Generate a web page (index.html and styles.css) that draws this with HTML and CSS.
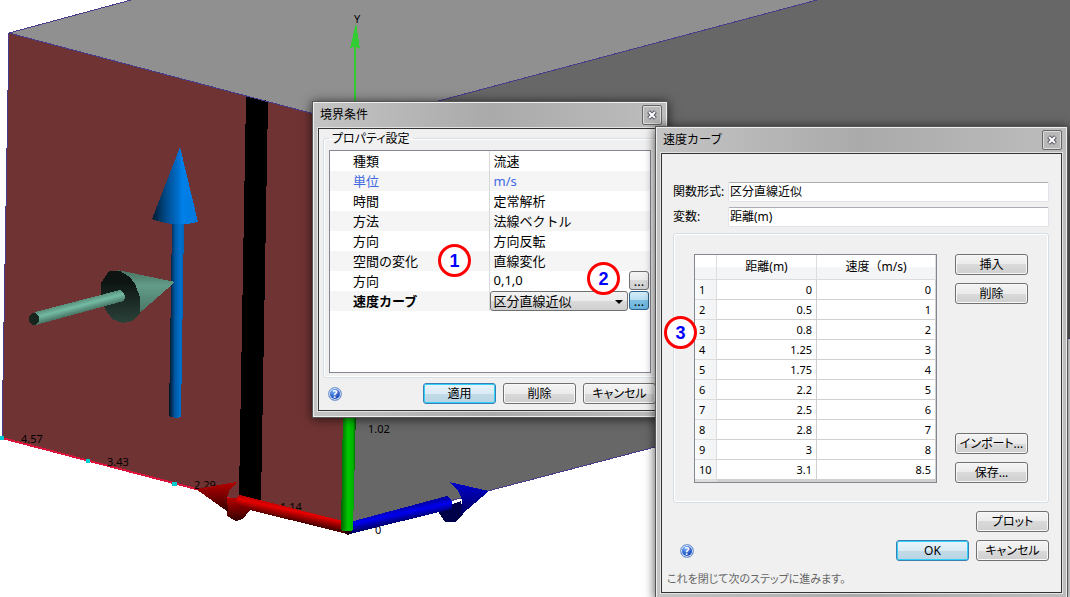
FILE: index.html
```html
<!DOCTYPE html>
<html lang="ja">
<head>
    <meta charset="UTF-8">
    <meta name="viewport" content="width=device-width, initial-scale=1.0">
    <title>境界条件</title>
    <link rel="stylesheet" href="styles.css">
</head>
<body>
    <svg class="scene" viewBox="0 0 1070 597" preserveAspectRatio="xMinYMin slice" shape-rendering="crispEdges">
        <defs>
            <linearGradient id="cone-up" x1="0" x2="1" y1="0" y2="0">
                <stop offset="0" stop-color="#001a30"/>
                <stop offset="0.3" stop-color="#004a88"/>
                <stop offset="0.58" stop-color="#0070d0"/>
                <stop offset="0.65" stop-color="#0080e8"/>
                <stop offset="1" stop-color="#0078dc"/>
            </linearGradient>
            <linearGradient id="rod-up" x1="0" x2="1" y1="0" y2="0">
                <stop offset="0" stop-color="#001020"/>
                <stop offset="0.4" stop-color="#0058a4"/>
                <stop offset="0.75" stop-color="#0070cc"/>
                <stop offset="1" stop-color="#0064b8"/>
            </linearGradient>
            <linearGradient id="rod-teal" gradientUnits="userSpaceOnUse" x1="75" y1="299" x2="79" y2="314">
                <stop offset="0" stop-color="#4a7a6a"/>
                <stop offset="0.5" stop-color="#74bba3"/>
                <stop offset="1" stop-color="#426c5e"/>
            </linearGradient>
            <linearGradient id="cone-teal" x1="0" x2="0" y1="0" y2="1">
                <stop offset="0" stop-color="#48705f"/>
                <stop offset="0.3" stop-color="#629c88"/>
                <stop offset="1" stop-color="#42695c"/>
            </linearGradient>
            <linearGradient id="disc-teal" x1="0" x2="0" y1="0" y2="1">
                <stop offset="0.2" stop-color="#0d1412"/>
                <stop offset="1" stop-color="#2a4239"/>
            </linearGradient>
            <linearGradient id="rod-green" x1="0" x2="1" y1="0" y2="0">
                <stop offset="0" stop-color="#006000"/>
                <stop offset="0.45" stop-color="#00c800"/>
                <stop offset="0.8" stop-color="#00b400"/>
                <stop offset="1" stop-color="#005000"/>
            </linearGradient>
            <linearGradient id="rod-red" gradientUnits="userSpaceOnUse" x1="290" y1="505" x2="287" y2="519">
                <stop offset="0" stop-color="#b00000"/>
                <stop offset="0.35" stop-color="#e80000"/>
                <stop offset="1" stop-color="#500000"/>
            </linearGradient>
            <linearGradient id="cone-red" x1="0" x2="0" y1="0" y2="1">
                <stop offset="0" stop-color="#b80000"/>
                <stop offset="1" stop-color="#300000"/>
            </linearGradient>
            <linearGradient id="rod-blue" gradientUnits="userSpaceOnUse" x1="400" y1="507" x2="403" y2="521">
                <stop offset="0" stop-color="#0000a0"/>
                <stop offset="0.45" stop-color="#0000f0"/>
                <stop offset="1" stop-color="#000070"/>
            </linearGradient>
            <linearGradient id="cone-blue" x1="0" x2="0" y1="0" y2="1">
                <stop offset="0" stop-color="#0000d0"/>
                <stop offset="1" stop-color="#000060"/>
            </linearGradient>
        </defs>

        <!-- box faces -->
        <path fill="#909090" d="M9 33 131 0H817L352 124Z"/>
        <path fill="#676767" d="M352 124 817 0H1070V338L347 528Z"/>
        <path fill="#703333" d="M9 33 352 124 347 528 2 438Z"/>
        <path fill="#000" d="M246 96 268 101 261 501 239 495Z"/>
        <path class="edge" d="M131 0 9 33 352 124 817 0M9 33 2 438M347 528 1070 338"/>
        <path fill="none" stroke="#dc143c" stroke-width="2" d="M2 438 200 490M227 498 240 500"/>
        <path fill="#00ced1" d="M0 436h4v4H0zM86 459h4v4h-4zM172 482h5v4h-5z"/>

        <g class="mark">
            <text x="21" y="443">4.57</text>
            <text x="107" y="466">3.43</text>
            <text x="194" y="489">2.29</text>
            <text x="280" y="511">1.14</text>
            <text x="368" y="433">1.02</text>
            <text x="375" y="534">0</text>
            <text x="354" y="23">Y</text>
        </g>

        <!-- y axis -->
        <path fill="#32cd32" d="M356 23 360 49 356 47V120H354V47L350 48Z"/>

        <!-- direction arrow -->
        <path fill="url(#rod-up)" d="M172 222H184L181 417Q175 419 169 416Z"/>
        <path fill="url(#cone-up)" d="M180 147 198 222Q175 228 152 219Z"/>

        <!-- normal arrow -->
        <path fill="url(#cone-teal)" d="M118 270 175 282 135 317 124 322Z"/>
        <path fill="url(#disc-teal)" d="M109 271H120L130 277 135 284 140 297V313L132 321 122 323 112 319 105 309 101 295V283Z"/>
        <path fill="url(#rod-teal)" d="M35 312 120 290Q127 294 124 301L36 325Z"/>
        <ellipse cx="34" cy="319" rx="5" ry="6" fill="#18251f"/>

        <!-- axis triad -->
        <path fill="url(#cone-red)" d="M227 498H240L250 510 243 519 236 521 227 516Z"/>
        <path fill="url(#cone-red)" d="M196 489 237 482 230 489 227 498 228 512Z"/>
        <path fill="url(#rod-red)" d="M240 495 347 522V534L238 507Q234 499 240 495Z"/>
        <path fill="#000048" d="M437 510 461 501 463 514 455 522H445Z"/>
        <path fill="url(#cone-blue)" d="M449 482 489 491 461 515 462 500Q459 489 449 482Z"/>
        <path fill="url(#rod-blue)" d="M350 522 447 496Q455 501 451 509L350 534Z"/>
        <path fill="url(#rod-green)" d="M343 410H356L353 530Q348 534 341 530Z"/>
        <path fill="#200010" d="M343 531H352L348 535Z"/>
    </svg>

    <section class="dialog dialog-condition">
        <header class="titlebar">
            <h1>境界条件</h1>
            <button class="close" aria-label="閉じる"><svg viewBox="0 0 10 10"><path class="outline" d="M3 3 7 7M7 3 3 7"/><path d="M2 2 8 8M8 2 2 8"/></svg></button>
        </header>
        <div class="panel">
            <fieldset class="group">
                <legend>プロパティ設定</legend>
                <div class="property-box">
                    <table class="properties">
                        <tr><th>種類</th><td>流速</td></tr>
                        <tr class="unit"><th>単位</th><td>m/s</td></tr>
                        <tr><th>時間</th><td>定常解析</td></tr>
                        <tr><th>方法</th><td>法線ベクトル</td></tr>
                        <tr><th>方向</th><td>方向反転</td></tr>
                        <tr><th>空間の変化</th><td>直線変化</td></tr>
                        <tr><th>方向</th><td><div class="editor"><span>0,1,0</span><button class="more" aria-label="方向を編集">...</button></div></td></tr>
                        <tr class="current">
                            <th><label for="curve">速度カーブ</label></th>
                            <td>
                                <div class="editor">
                                    <span class="combo"><select id="curve"><option>区分直線近似</option></select></span>
                                    <button class="more active" aria-label="速度カーブを編集">...</button>
                                </div>
                            </td>
                        </tr>
                    </table>
                </div>
            </fieldset>
            <footer class="actions">
                <button class="help" aria-label="ヘルプ">?</button>
                <button class="btn primary">適用</button>
                <button class="btn">削除</button>
                <button class="btn">キャンセル</button>
            </footer>
        </div>
    </section>

    <section class="dialog dialog-curve">
        <header class="titlebar">
            <h1>速度カーブ</h1>
            <button class="close" aria-label="閉じる"><svg viewBox="0 0 10 10"><path class="outline" d="M3 3 7 7M7 3 3 7"/><path d="M2 2 8 8M8 2 2 8"/></svg></button>
        </header>
        <div class="panel">
            <div class="fields">
                <label for="form">関数形式:</label>
                <input type="text" id="form" value="区分直線近似">
                <label for="variable">変数:</label>
                <input type="text" id="variable" value="距離(m)">
            </div>
            <div class="group curve-data">
                <table class="points">
                    <thead>
                        <tr><th></th><th>距離(m)</th><th>速度（m/s)</th></tr>
                    </thead>
                    <tbody>
                        <tr><th>1</th><td>0</td><td>0</td></tr>
                        <tr><th>2</th><td>0.5</td><td>1</td></tr>
                        <tr><th>3</th><td>0.8</td><td>2</td></tr>
                        <tr><th>4</th><td>1.25</td><td>3</td></tr>
                        <tr><th>5</th><td>1.75</td><td>4</td></tr>
                        <tr><th>6</th><td>2.2</td><td>5</td></tr>
                        <tr><th>7</th><td>2.5</td><td>6</td></tr>
                        <tr><th>8</th><td>2.8</td><td>7</td></tr>
                        <tr><th>9</th><td>3</td><td>8</td></tr>
                        <tr><th>10</th><td>3.1</td><td>8.5</td></tr>
                    </tbody>
                </table>
                <div class="side">
                    <button class="btn">挿入</button>
                    <button class="btn">削除</button>
                    <button class="btn import">インポート...</button>
                    <button class="btn">保存...</button>
                </div>
            </div>
            <div class="plot">
                <button class="btn">プロット</button>
            </div>
            <footer class="actions">
                <button class="help" aria-label="ヘルプ">?</button>
                <button class="btn primary">OK</button>
                <button class="btn">キャンセル</button>
            </footer>
            <p class="status">これを閉じて次のステップに進みます。</p>
        </div>
    </section>

    <span class="step step-1">1</span>
    <span class="step step-2">2</span>
    <span class="step step-3">3</span>
</body>
</html>
```
FILE: styles.css
```css
* { box-sizing: border-box; }
body { margin: 0; height: 100vh; position: relative; overflow: hidden; background: #fff; color: #000; font: 12px/20px "Noto Sans", "Noto Sans CJK JP", sans-serif; }
button, input, select { font: inherit; color: inherit; margin: 0; padding: 0; }

.scene { display: block; width: 100%; height: 100%; }
.edge { fill: none; stroke: #483d8b; stroke-width: 1; }
.mark { font-size: 11px; }

/* dialogs */
.dialog { position: absolute; padding: 0 5px 6px; border: 1px solid #555; background: linear-gradient(90deg, #c4c4c4, #aaa 50%, #bdbdbd); box-shadow: inset 0 0 0 1px #eee, 0 1px 10px rgba(0, 0, 0, 0.7); }
.dialog-condition { left: 312px; top: 101px; width: 356px; }
.dialog-curve { left: 655px; top: 126px; width: 413px; }
.titlebar { display: flex; justify-content: space-between; height: 26px; padding-top: 3px; }
.titlebar h1 { margin: 0; padding: 0 2px; font-size: 12px; line-height: 19px; font-weight: normal; }
.close { display: grid; place-items: center; width: 20px; height: 20px; border: 1px solid #666; border-radius: 2px; background: #b8b8b8; box-shadow: inset 0 0 0 1px #ddd; }
.close svg { width: 10px; height: 10px; fill: none; stroke: #fff; stroke-width: 2; }
.close .outline { stroke: #556; stroke-width: 4; stroke-linecap: square; }
.panel { border: 1px solid #333; background: #f0f0f0; box-shadow: 0 0 0 1px #e4e4e4; }

.group { min-width: 0; margin: 0; border: 1px solid #d5dfe5; border-radius: 3px; box-shadow: inset 0 0 0 1px #fff; }
.group legend { padding: 0 3px; line-height: 19px; font-feature-settings: "palt"; }

.btn { width: 73px; height: 21px; border: 1px solid #707070; border-radius: 3px; background: linear-gradient(#f4f4f4, #ebebeb 50%, #dadada 50%, #cfcfcf); box-shadow: inset 0 0 0 1px #f8f8f8; line-height: 18px; white-space: nowrap; font-feature-settings: "palt"; }
.btn.primary { border-color: #3c7fb1; background: linear-gradient(#eaf4fa, #d9ebf5 50%, #c3dbe8 50%, #b8d4e4); box-shadow: inset 0 0 0 1px #2fd0fa; }
.actions { display: flex; align-items: center; gap: 7px; }
.help { width: 14px; height: 14px; margin-right: auto; border: 1px solid #7c9cd0; border-radius: 50%; background: radial-gradient(circle at 40% 25%, #7fb4ff, #1c50c0 60%, #1038a0); box-shadow: inset 0 0 0 1px #dce8fa; color: #fff; font-size: 10px; line-height: 12px; font-weight: bold; }

/* boundary condition */
.dialog-condition .panel { padding: 0 4px 6px; }
.dialog-condition .group { padding: 2px 5px 4px; }
.property-box { height: 223px; border: 1px solid #828790; background: #fff; }
.properties { width: 100%; border-collapse: collapse; table-layout: fixed; font-size: 13px; }
.properties tr { height: 20px; }
.properties tr:nth-child(even) { background: #f5f5f5; }
.properties th { width: 159px; padding: 0 0 0 23px; border-right: 1px solid #d8d8d8; text-align: left; font-weight: normal; line-height: 18px; }
.properties td { padding: 0 0 0 4px; line-height: 18px; }
.unit { color: #4169e1; }
.properties .current { background: #f0f0f0; }
.properties .current th { font-weight: bold; }
.properties .current td { padding-left: 0; background: #fff; }
.editor { display: flex; gap: 1px; height: 20px; padding-right: 1px; }
.editor > span { flex: 1; }
.combo { position: relative; border: 1px solid #707070; border-radius: 3px; background: linear-gradient(#f2f2f2, #ebebeb 50%, #dadada 50%, #cfcfcf); }
.combo::after { content: ""; position: absolute; right: 4px; top: 8px; border: 4px solid transparent; border-top-color: #000; border-bottom: 0; }
.combo select { appearance: none; width: 100%; height: 18px; padding-left: 3px; border: 0; background: transparent; line-height: 18px; }
.more { width: 20px; height: 19px; border: 1px solid #707070; border-radius: 3px; background: linear-gradient(#f4f4f4, #ebebeb 50%, #dadada 50%, #cfcfcf); line-height: 14px; }
.more.active { border-color: #2c628b; background: linear-gradient(#d5ecf8, #b2ddf2 50%, #7fc0e2 50%, #68b3db); }
.dialog-condition .actions { padding: 5px 1px 0 5px; }

/* velocity curve */
.dialog-curve .panel { padding: 28px 12px 3px 11px; }
.fields { display: grid; grid-template-columns: 55px 1fr; row-gap: 5px; align-items: center; line-height: 20px; font-feature-settings: "palt"; }
.fields input { width: 100%; height: 20px; padding: 0 1px; border: 1px solid #e2e3ea; border-top-color: #abadb3; border-radius: 2px; background: #fff; font-feature-settings: "palt"; }
.curve-data { display: flex; justify-content: space-between; margin-top: 6px; padding: 20px 20px 19px; }
.points { width: 243px; border: 1px solid #828790; border-spacing: 0; table-layout: fixed; background: #fff; font-size: 11px; }
.points th { font-weight: normal; border-right: 1px solid #ddd; border-bottom: 1px solid #ddd; padding: 0; }
.points thead th { height: 25px; font-size: 12px; line-height: 20px; background: linear-gradient(#fff 50%, #f4f5f7 50%); }
.points th:first-child { width: 22px; }
.points th:nth-child(2) { width: 100px; }
.points tbody th { padding-left: 4px; text-align: left; line-height: 19px; background: linear-gradient(90deg, #fafbfc, #f1f3f5); }
.points td { height: 20px; padding: 0 4px 0 0; border-right: 1px solid #d0d0d0; border-bottom: 1px solid #d0d0d0; text-align: right; line-height: 19px; }
.points tbody tr:last-child > * { height: 22px; border-bottom-width: 3px; }
.side { display: flex; flex-direction: column; gap: 8px; }
.side .import { margin-top: auto; }
.plot { display: flex; justify-content: flex-end; margin: 8px 0; }
.dialog-curve .actions { padding-left: 7px; }
.status { margin: 8px 0 0 -6px; color: #666; font-size: 11px; font-feature-settings: "palt"; }

/* numbered callouts */
.step { position: absolute; width: 33px; height: 33px; border: 3px solid #f00; border-radius: 50%; background: #fff; color: #00f; font: bold 18px/28px "Liberation Sans", Arial, sans-serif; text-align: center; }
.step-1 { left: 438px; top: 244px; }
.step-2 { left: 587px; top: 262px; }
.step-3 { left: 664px; top: 316px; }
```
